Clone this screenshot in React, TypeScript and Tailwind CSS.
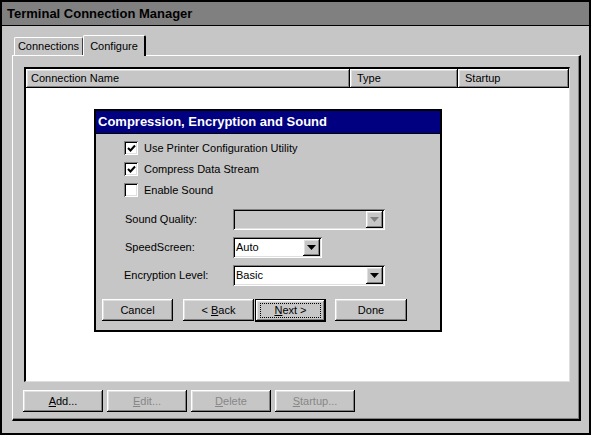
const raised =
  "shadow-[inset_-1px_-1px_0_#000,inset_1px_1px_0_#fff,inset_-2px_-2px_0_#808080,inset_2px_2px_0_#dfdfdf]";
const sunken =
  "shadow-[inset_1px_1px_0_#808080,inset_-1px_-1px_0_#fff,inset_2px_2px_0_#000,inset_-2px_-2px_0_#dfdfdf]";

function Check({ checked }: { checked?: boolean }) {
  return (
    <div className={`w-[14px] h-[14px] bg-white flex items-center justify-center ${sunken}`}>
      {checked && (
        <svg width="9" height="9" viewBox="0 0 9 9">
          <path d="M1 4 L3.5 6.5 L8 1.5" stroke="#000" strokeWidth="2" fill="none" />
        </svg>
      )}
    </div>
  );
}

function Combo({ value, width, disabled }: { value?: string; width: string; disabled?: boolean }) {
  return (
    <div className={`${width} h-[21px] flex items-center p-[2px] ${disabled ? "bg-[#c6c6c6]" : "bg-white"} ${sunken}`}>
      <span className="flex-1 pl-[1px] text-[11px] text-black">{value}</span>
      <div className={`w-[17px] h-[17px] bg-[#c6c6c6] flex items-center justify-center ${raised}`}>
        <svg width="9" height="5" viewBox="0 0 9 5">
          <path d="M0 0 H9 L4.5 5 Z" fill={disabled ? "#808080" : "#000"} />
        </svg>
      </div>
    </div>
  );
}

function Btn({ children, width, disabled }: { children: React.ReactNode; width: string; disabled?: boolean }) {
  return (
    <div
      className={`${width} h-[22px] flex items-center justify-center bg-[#c6c6c6] text-[11px] ${raised} ${
        disabled ? "text-[#868686]" : "text-black"
      }`}
    >
      {children}
    </div>
  );
}

export default function App() {
  return (
    <div
      className="w-[591px] h-[435px] border-2 border-black bg-[#c6c6c6] flex flex-col relative"
      style={{ fontFamily: "Tahoma, 'Liberation Sans', Arial, sans-serif" }}
    >
      <div className="h-[24px] bg-[#808080] border-b border-black flex items-center pl-[5px] text-[13px] font-bold text-black">
        Terminal Connection Manager
      </div>

      <div className="pl-[10px] pt-[9px]">
        <div className="flex items-end h-[20px] pl-[2px]">
          <div className="h-[18px] w-[69px] border-t border-l border-white border-r border-r-[#404040] rounded-t-[2px] flex items-center justify-center text-[11px] text-black">
            Connections
          </div>
          <div className="h-[21px] w-[63px] -mb-[1px] bg-[#c6c6c6] border-t border-l border-white border-r-2 border-r-black rounded-t-[2px] flex items-center justify-center text-[11px] text-black relative z-10">
            Configure
          </div>
        </div>

        <div className="w-[569px] h-[366px] border-t border-l border-white border-r-2 border-b-2 border-r-black border-b-black shadow-[inset_-1px_-1px_0_#808080] pl-[11px] pt-[11px]">
          <div className="w-[546px] h-[315px] bg-white border-t-2 border-l-2 border-t-black border-l-black border-r border-b border-r-[#dfdfdf] border-b-[#dfdfdf] flex flex-col">
            <div className="h-[19px] flex text-[11px] text-black">
              <div className={`w-[324px] bg-[#c6c6c6] pl-[5px] flex items-center ${raised}`}>Connection Name</div>
              <div className={`w-[108px] bg-[#c6c6c6] pl-[7px] flex items-center ${raised}`}>Type</div>
              <div className={`flex-1 bg-[#c6c6c6] pl-[7px] flex items-center ${raised}`}>Startup</div>
            </div>
          </div>

          <div className="flex gap-[4px] mt-[8px] -ml-[1px]">
            <Btn width="w-[80px]">
              <span className="underline">A</span>dd...
            </Btn>
            <Btn width="w-[80px]" disabled>
              <span className="underline">E</span>dit...
            </Btn>
            <Btn width="w-[80px]" disabled>
              <span className="underline">D</span>elete
            </Btn>
            <Btn width="w-[80px]" disabled>
              <span className="underline">S</span>tartup...
            </Btn>
          </div>
        </div>
      </div>

      {/* dialog overlay */}
      <div className="absolute left-[92px] top-[107px] w-[348px] h-[223px] bg-[#c6c6c6] border-2 border-black flex flex-col">
        <div className="h-[23px] bg-[#000080] border-b border-black flex items-center pl-[2px] text-[13px] font-bold text-white">
          Compression, Encryption and Sound
        </div>
        <div className="pl-[28px] pt-[7px] flex flex-col gap-[7px] text-[11px] text-black">
          <div className="flex items-center gap-[6px] h-[14px]">
            <Check checked />
            <span>Use Printer Configuration Utility</span>
          </div>
          <div className="flex items-center gap-[6px] h-[14px]">
            <Check checked />
            <span>Compress Data Stream</span>
          </div>
          <div className="flex items-center gap-[6px] h-[14px]">
            <Check />
            <span>Enable Sound</span>
          </div>
        </div>

        <div className="pl-[29px] mt-[12px] flex flex-col gap-[7px] text-[11px] text-black">
          <div className="flex items-center h-[21px]">
            <span className="w-[108px]">Sound Quality:</span>
            <Combo width="w-[152px]" disabled />
          </div>
          <div className="flex items-center h-[21px]">
            <span className="w-[108px]">SpeedScreen:</span>
            <Combo width="w-[89px]" value="Auto" />
          </div>
          <div className="flex items-center h-[21px] -ml-[1px]">
            <span className="w-[109px]">Encryption Level:</span>
            <Combo width="w-[152px]" value="Basic" />
          </div>
        </div>

        <div className="flex pl-[6px] mt-[13px]">
          <Btn width="w-[71px]">Cancel</Btn>
          <div className="ml-[10px]">
            <Btn width="w-[71px]">
              &lt; <span className="underline ml-[3px]">B</span>ack
            </Btn>
          </div>
          <div className="ml-[1px] w-[71px] h-[23px] border border-black">
            <div className={`w-full h-full flex items-center justify-center bg-[#c6c6c6] ${raised}`}>
              <div className="w-[61px] h-[15px] border border-dotted border-black flex items-center justify-center text-[11px] text-black">
                <span className="underline">N</span>ext &gt;
              </div>
            </div>
          </div>
          <div className="ml-[9px]">
            <Btn width="w-[72px]">Done</Btn>
          </div>
        </div>
      </div>
    </div>
  );
}
